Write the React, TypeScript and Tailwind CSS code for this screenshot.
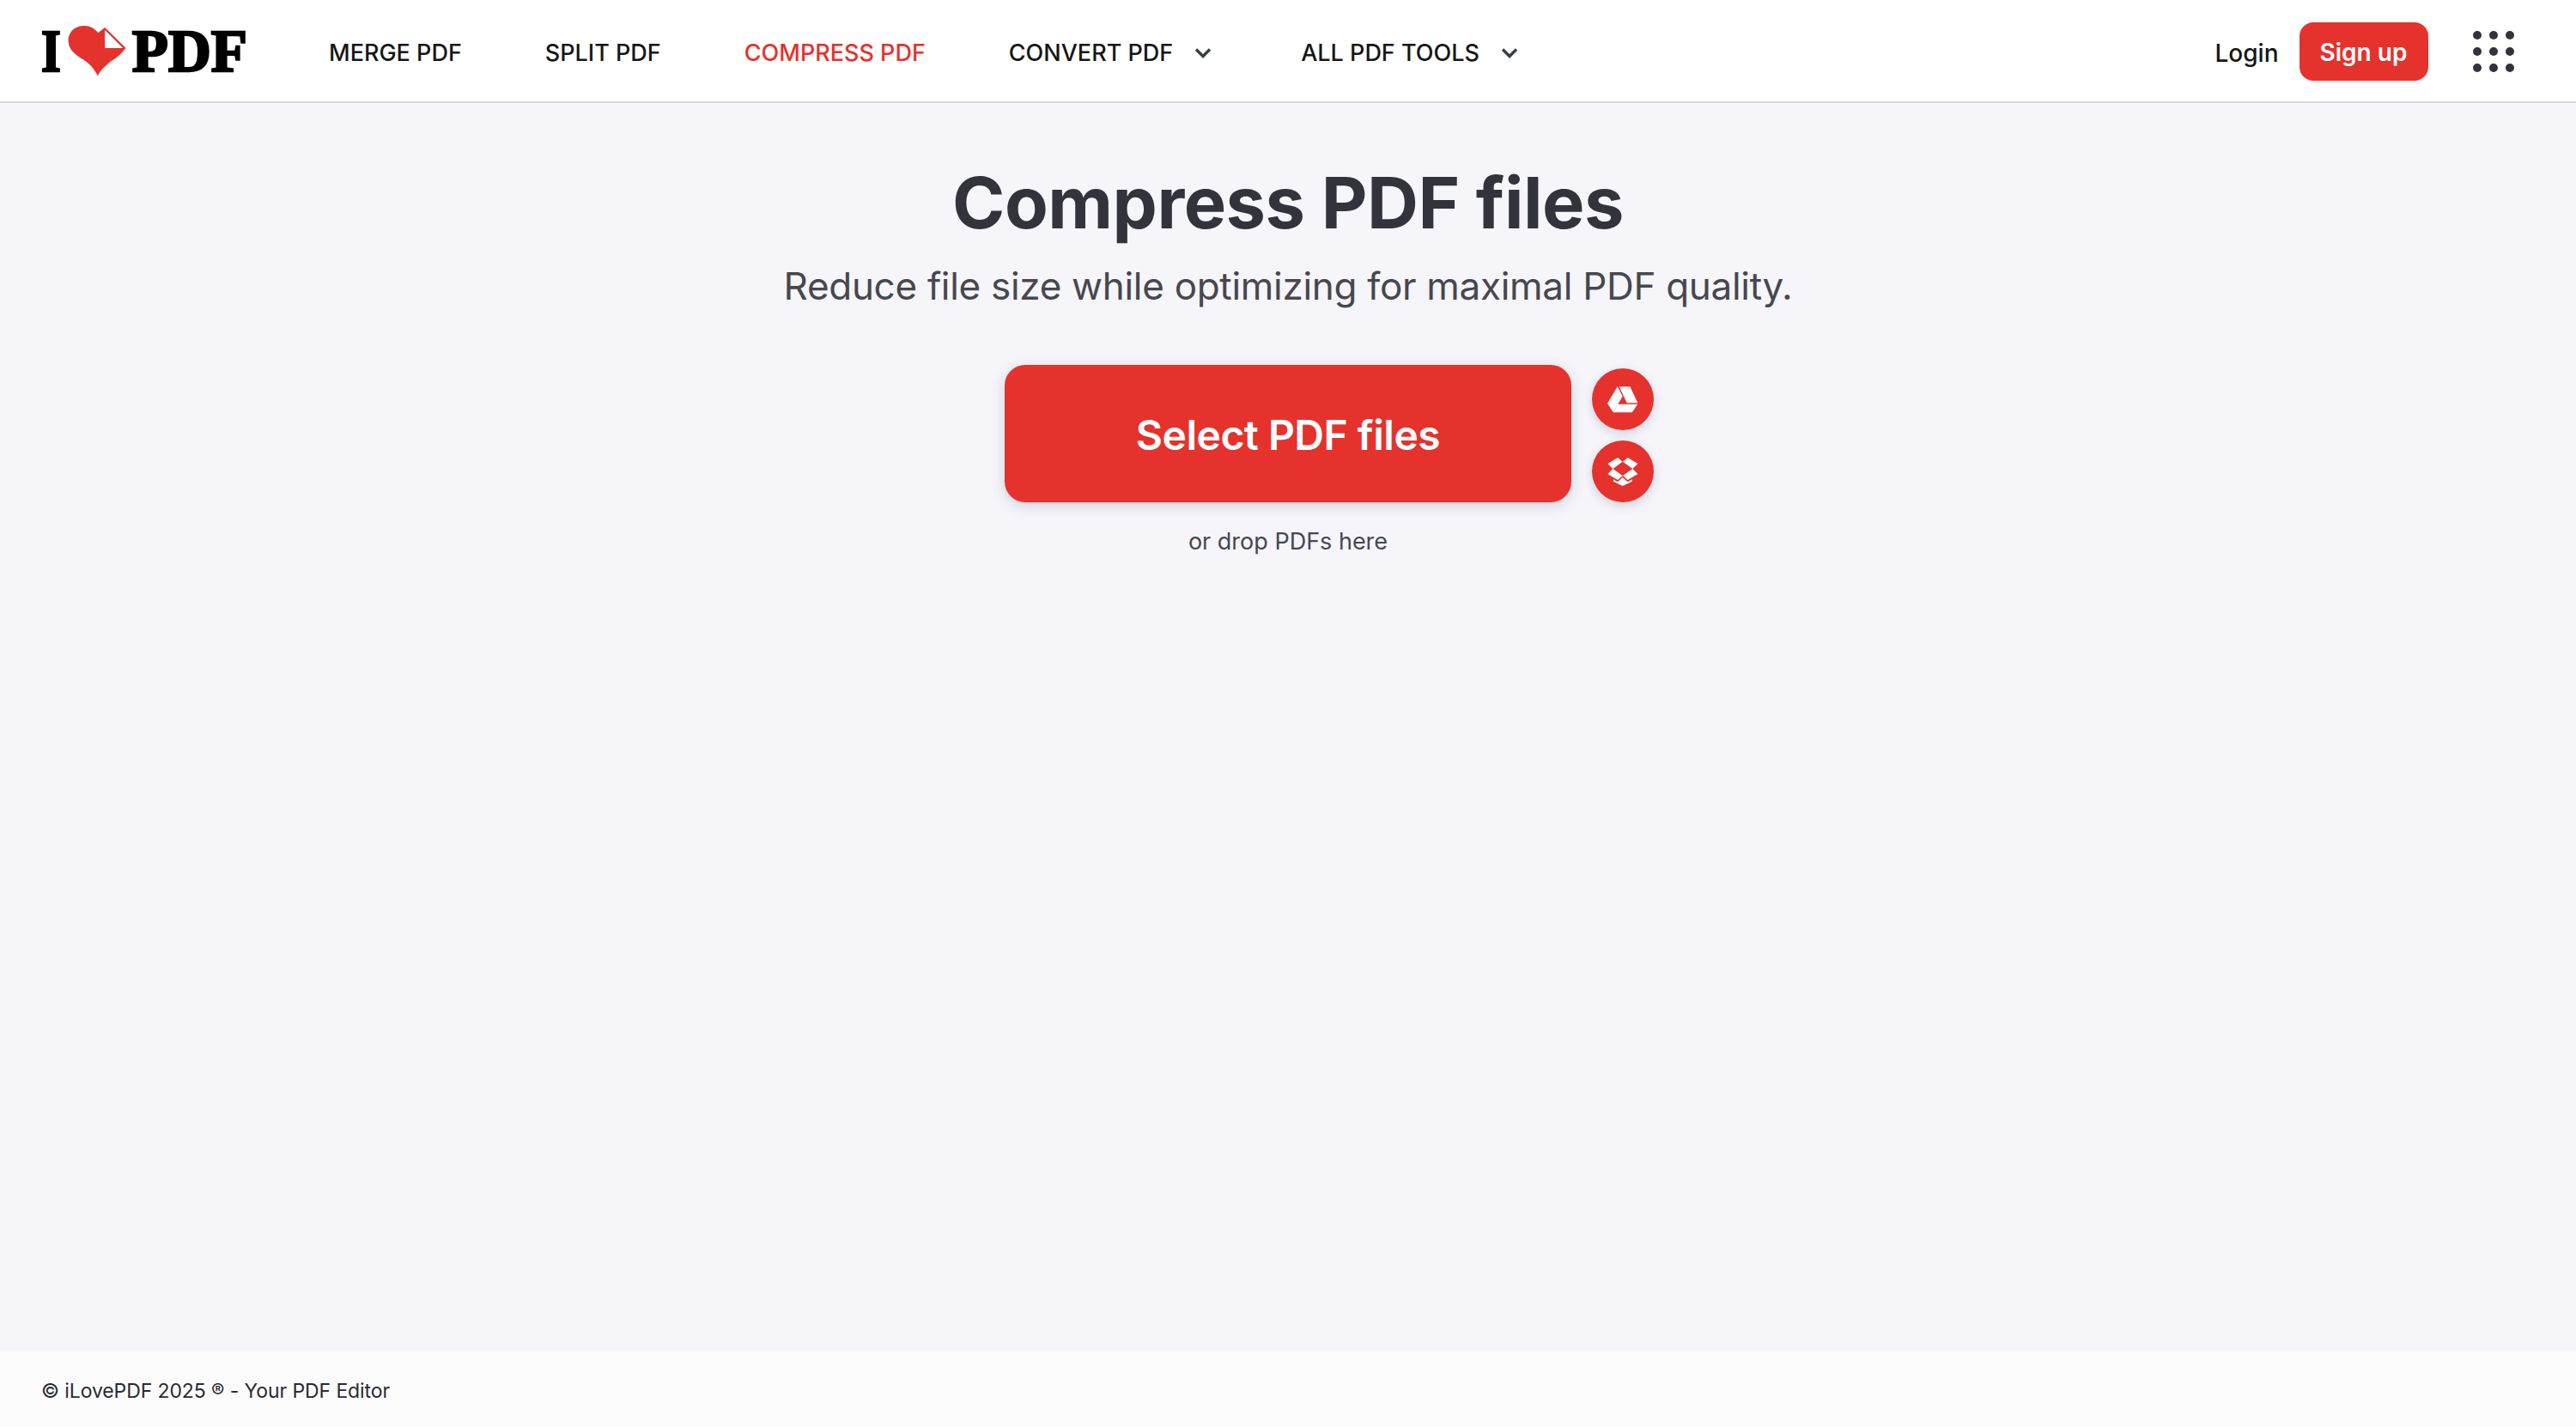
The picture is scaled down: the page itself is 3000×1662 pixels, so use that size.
import React from 'react';

const navItems = [
  { label: 'MERGE PDF', className: 'text-[#161616]' },
  { label: 'SPLIT PDF', className: 'text-[#161616]' },
  { label: 'COMPRESS PDF', className: 'text-[#e5322d]' },
  { label: 'CONVERT PDF', className: 'text-[#161616]', caret: true },
  { label: 'ALL PDF TOOLS', className: 'text-[#161616]', caret: true },
];

const Caret = () => (
  <svg width="20" height="14" viewBox="0 0 20 14" fill="none" className="mr-[7px] ml-[25px]">
    <path d="M2 2.5 10 10.5l8-8" stroke="#383e45" strokeWidth="3.4" />
  </svg>
);

const Heart = () => (
  <svg width="70" height="62" viewBox="236 88 206 182" className="ml-[8px]">
    <path
      d="M343 116C326 94 300 86 274 94 248 102 236 124 238 148 240 176 262 194 290 210 312 224 330 244 342 268 352 248 372 228 396 212 412 202 428 186 441 170L367 97Z"
      fill="#e5322d"
    />
    <path d="M367 106V170H431Z" fill="#fff" />
  </svg>
);

const Logo = () => (
  <div className="flex w-[240px] shrink-0 items-center font-['Liberation_Serif',serif] text-[69px] leading-none font-bold text-black [-webkit-text-stroke:2.5px_black]">
    <span className="w-[23px] translate-y-[1px] scale-x-[0.85] origin-left">I</span>
    <Heart />
    <span className="ml-[7px] translate-y-[1px]">PDF</span>
  </div>
);

const DriveIcon = () => (
  <svg width="36" height="31" viewBox="0 0 108 92" fill="#fff">
    <path d="M35 0 0 59 20 90 53 34Z" />
    <path d="M41 0H79L106 57H68Z" />
    <path d="M33 62H106L86 90H20L33 68Z" />
  </svg>
);

const DropboxIcon = () => (
  <svg width="36" height="33" viewBox="218 394 106 99" fill="#fff">
    <path d="M218 415 253 394 270 408 236 433Z" />
    <path d="M323 415 288 394 271 408 305 433Z" />
    <path d="M218 451 253 472 270 457 236 433Z" />
    <path d="M323 451 288 472 271 457 305 433Z" />
    <path d="M238 470 253 479 270 463 288 479 303 470V477L270 493 238 477Z" />
  </svg>
);

const RoundButton = ({ children }: { children: React.ReactNode }) => (
  <button className="flex h-[72px] w-[72px] items-center justify-center rounded-full bg-[#e5322d] shadow-[0_4px_12px_rgba(72,72,104,0.2)]">
    {children}
  </button>
);

export default function App() {
  return (
    <div className="flex h-[1662px] flex-col overflow-hidden bg-[#f5f5fa] font-['Inter',sans-serif]">
      <header className="flex h-[120px] shrink-0 items-center border-b-2 border-[#d8d8e0] bg-white pr-[72px] pl-[48px]">
        <Logo />
        <nav className="ml-[95px] flex translate-y-[3px] items-center gap-[97px]">
          {navItems.map((item) => (
            <a key={item.label} className={`flex items-center text-[27px] font-medium ${item.className}`}>
              {item.label}
              {item.caret && <Caret />}
            </a>
          ))}
        </nav>
        <div className="ml-auto flex translate-y-[1px] items-center">
          <a className="translate-y-[2px] text-[28px] font-medium text-[#161616]">Login</a>
          <button className="ml-[24px] flex h-[68px] w-[150px] items-center justify-center rounded-[16px] bg-[#e5322d] pt-[1px] text-[28px] font-semibold text-white">
            Sign up
          </button>
          <div className="ml-[52px] grid grid-cols-3 gap-x-[8.5px] gap-y-[8.5px]">
            {Array.from({ length: 9 }).map((_, i) => (
              <span key={i} className="h-[10.5px] w-[10.5px] rounded-full bg-[#33333b]" />
            ))}
          </div>
        </div>
      </header>

      <main className="flex flex-1 flex-col items-center">
        <h1 className="mt-[66px] text-[83px] leading-[100px] font-bold tracking-[-0.5px] text-[#33333b]">Compress PDF files</h1>
        <p className="mt-[16px] text-[44px] leading-[62px] font-normal tracking-[-0.3px] text-[#47474f]">
          Reduce file size while optimizing for maximal PDF quality.
        </p>
        <div className="relative mt-[61px]">
          <button className="flex h-[160px] w-[660px] items-center justify-center rounded-[24px] bg-[#e5322d] pt-[4px] text-[48px] font-semibold tracking-[-0.5px] text-white shadow-[0_4px_16px_rgba(72,72,104,0.2)]">
            Select PDF files
          </button>
          <div className="absolute top-[4px] left-[684px] flex flex-col gap-[12px]">
            <RoundButton>
              <DriveIcon />
            </RoundButton>
            <RoundButton>
              <DropboxIcon />
            </RoundButton>
          </div>
        </div>
        <p className="mt-[29px] text-[27px] leading-[34px] text-[#47474f]">or drop PDFs here</p>
      </main>

      <footer className="flex h-[88px] shrink-0 items-center bg-[#fcfcfd] pt-[4px] pl-[48px] text-[23px] tracking-[-0.1px] text-[#2a2a30]">
        © iLovePDF 2025 ® - Your PDF Editor
      </footer>
    </div>
  );
}
